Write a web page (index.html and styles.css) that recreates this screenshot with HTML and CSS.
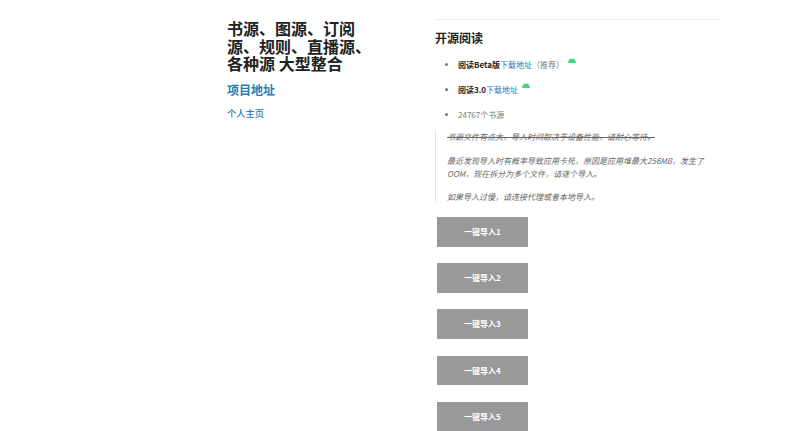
FILE: index.html
```html
<!DOCTYPE html>
<html lang="zh-CN">
  <head>
    <meta charset="UTF-8" />
    <meta name="viewport" content="width=device-width, initial-scale=1.0" />
    <title>开源阅读</title>
    <link rel="stylesheet" href="styles.css">
  </head>
  <body>
    <div class="wrapper">
      <!-- left column -->
      <header class="side">
        <h1>书源、图源、订阅源、规则、直播源、各种源 大型整合</h1>
        <p class="repo"><a href="#">项目地址</a></p>
        <p class="home"><a href="#">个人主页</a></p>
      </header>
      <!-- right column -->
      <section class="main">
        <hr />
        <h2>开源阅读</h2>
        <ul>
          <li>
            <strong>阅读Beta版</strong><a href="#">下载地址</a>（推荐）
            <svg class="android" viewBox="0 0 16 10"><path d="M0 10C.4 6 2 3.800 4.300 2.500L3 .3l.8-.3L5.300 2C6 1.700 7 1.500 8 1.500s2 .2 2.700.5L12.200 0l.8.3-1.300 2.200C14 3.800 15.600 6 16 10z" /></svg>
          </li>
          <li>
            <strong>阅读3.0</strong><a href="#">下载地址</a>
            <svg class="android" viewBox="0 0 16 10"><path d="M0 10C.4 6 2 3.800 4.300 2.500L3 .3l.8-.3L5.300 2C6 1.700 7 1.500 8 1.500s2 .2 2.700.5L12.200 0l.8.3-1.300 2.200C14 3.800 15.600 6 16 10z" /></svg>
          </li>
          <li>24767个书源</li>
        </ul>
        <blockquote>
          <p><del>书源文件有点大，导入时间取决于设备性能，请耐心等待。</del></p>
          <p>最近发现导入时有概率导致应用卡死，原因是应用堆最大256MB，发生了OOM，现在拆分为多个文件，请逐个导入。</p>
          <p>如果导入过慢，请连接代理或者本地导入。</p>
        </blockquote>
        <div class="imports">
          <a class="button" href="#">一键导入1</a>
          <a class="button" href="#">一键导入2</a>
          <a class="button" href="#">一键导入3</a>
          <a class="button" href="#">一键导入4</a>
          <a class="button" href="#">一键导入5</a>
        </div>
      </section>
    </div>
  </body>
</html>
```

FILE: styles.css
```css
/* base */
body {
  margin: 0;
  background: #fff;
  color: #777;
  font-family: "Noto Sans CJK SC", "Noto Sans", sans-serif;
  font-size: 8px;
  overflow: hidden;
}

a {
  color: #267cb9;
  text-decoration: none;
}

.wrapper {
  display: flex;
  padding: 19px 0 0 227px;
}

/* left column */
.side {
  width: 144px;
  margin-right: 64px;
  flex-shrink: 0;
}

.side h1 {
  margin: 1px 0 0;
  color: #222;
  font-size: 16px;
  line-height: 17.500px;
  font-weight: 700;
}

.repo {
  margin: 8px 0 0;
  font-size: 12px;
  line-height: 18px;
  font-weight: 700;
}

.home {
  margin: 7px 0 0;
  font-size: 9.250px;
  line-height: 14px;
  font-weight: 500;
}

/* right column */
.main {
  width: 287px;
}

.main hr {
  height: 1px;
  margin: 0;
  border: 0;
  background: #eee;
}

.main h2 {
  margin: 9px 0 0;
  color: #222;
  font-size: 12px;
  line-height: 18px;
  font-weight: 700;
}

.main ul {
  margin: 11px 0 0;
  padding: 0 0 0 23px;
}

.main li {
  height: 14px;
  margin-bottom: 11px;
  line-height: 14px;
  font-size: 8px;
}

.main li:last-child {
  margin-bottom: 0;
}

.main li strong {
  color: #222;
}

.android {
  width: 8px;
  height: 5px;
  margin: 0 0 5px 2px;
  fill: #3ddc84;
}

blockquote {
  margin: 8px 0 0;
  padding: 0 0 0 11px;
  border-left: 1px solid #e5e5e5;
  font-style: italic;
  color: #666;
}

blockquote p {
  margin: 0 0 10px;
  line-height: 13px;
}

blockquote p:first-child {
  margin-bottom: 11px;
}

blockquote p:last-child {
  margin-bottom: 0;
}

/* import buttons */
.imports {
  display: flex;
  flex-direction: column;
  align-items: flex-start;
  gap: 16.700px;
  margin: 14px 0 0 2px;
}

.button {
  width: 91px;
  height: 29.500px;
  background: #999;
  color: #fff;
  font-size: 8px;
  font-weight: 700;
  line-height: 29px;
  text-align: center;
}
```
